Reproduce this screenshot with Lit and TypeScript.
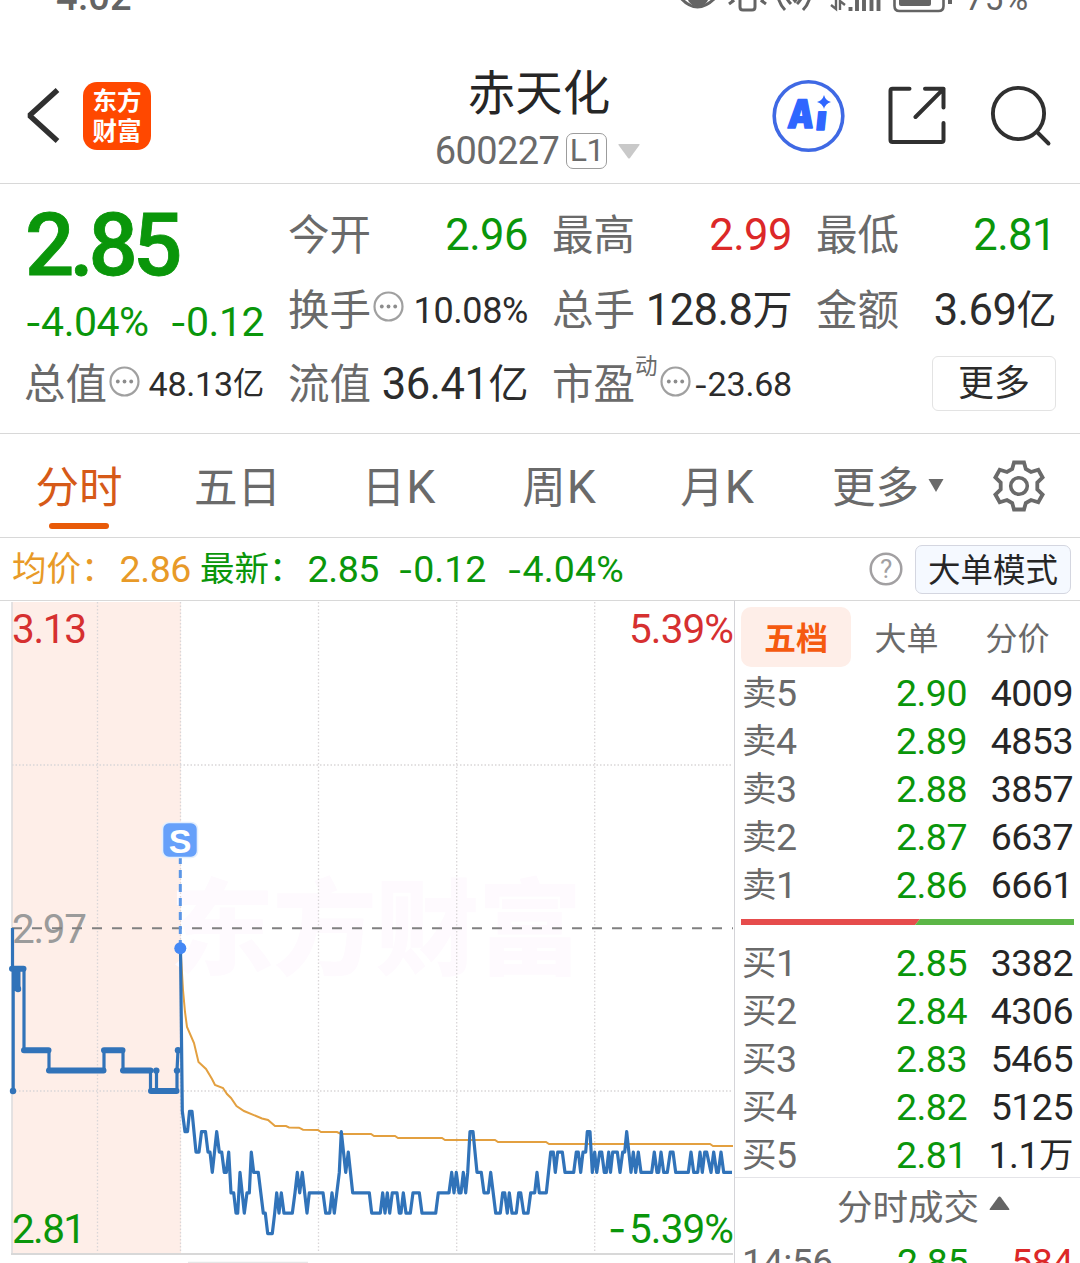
import { LitElement, html, svg, css } from "lit";
import { customElement, property } from "lit/decorators.js";

/** Splits a label into CJK, minus and plain runs so each gets its own metrics. */
const runs = (s: string) =>
  (s.match(/[\u4e00-\u9fff\uff1a]+|-|[^\u4e00-\u9fff\uff1a-]+/g) ?? []).map((r) =>
    /[\u4e00-\u9fff\uff1a]/.test(r)
      ? html`<span class="cjk">${r}</span>`
      : r === "-"
        ? html`<span class="neg">-</span>`
        : html`<span>${r}</span>`
  );

const base = css`
  :host,
  * {
    box-sizing: border-box;
  }
  .cjk {
    font-family: "Noto Sans CJK SC", sans-serif;
    font-size: 0.92em;
    line-height: 1;
    vertical-align: 1px;
  }
  .neg {
    font-family: Inter, sans-serif;
    font-size: 0.88em;
    line-height: 1;
  }
  .up {
    color: #dc2828;
  }
  .down {
    color: #0a960a;
  }
  svg {
    display: block;
    flex: none;
  }
`;

// Prices in cents against the horizontal position of each minute sample.
const PRICE: [number, number][] = [
  [180.5, 296], [182.3, 288], [185, 287], [187.5, 287], [189.5, 288], [192, 288], [196, 286], [199, 286],
  [201.5, 287], [205.5, 287], [208, 286], [210, 286], [212.3, 285], [216.7, 287], [219.3, 286], [221.7, 286],
  [224.3, 285], [226.3, 285], [228.7, 286], [231, 284], [233.7, 284], [236, 283], [237.7, 283], [240, 285],
  [244.3, 283], [247, 284], [249.3, 284], [251.3, 286], [253.7, 285], [258.3, 285], [263.3, 283], [265.3, 283],
  [267.7, 282], [272.3, 282], [274.7, 283], [276.7, 284], [279, 283], [281.3, 284], [284, 283], [292.3, 283],
  [295, 284], [297.3, 285], [299.7, 284], [302.3, 285], [307, 283], [309.3, 284], [323, 284], [325.7, 283],
  [329.7, 283], [332, 284], [334.3, 283], [339.3, 285], [341.3, 287], [345.7, 285], [348.3, 286], [352.7, 284],
  [369.3, 284], [371.7, 283], [380.3, 283], [382.7, 284], [385, 283], [387.3, 284], [389.7, 283], [392.3, 284],
  [397, 284], [399.3, 283], [401, 283], [403.3, 284], [406, 283], [410.3, 283], [413, 284], [419.3, 284],
  [422, 283], [435.7, 283], [438.3, 284], [449, 284], [451.7, 285], [454, 284], [456.3, 285], [459, 284],
  [461, 284], [463.3, 285], [465.7, 284], [467.7, 285], [470, 287], [473, 287], [477, 285], [481.3, 285],
  [484, 284], [488.3, 284], [490.7, 285], [495.7, 283], [500.3, 283], [502.7, 284], [504.7, 284], [507.3, 283],
  [509.3, 284], [512, 283], [516.3, 283], [518.7, 284], [520.7, 284], [523.7, 283], [528, 283], [530.7, 284],
  [534.7, 284], [537, 285], [539.3, 284], [546.3, 284], [550.7, 286], [553.3, 286], [555.3, 285], [557.7, 286],
  [562.3, 286], [565, 285], [573.7, 285], [576.3, 286], [578.3, 286], [580.7, 285], [583, 286], [585.7, 286],
  [587.3, 287], [590, 287], [592.3, 285], [594.7, 286], [596.7, 285], [599.7, 286], [601.7, 286], [604.3, 285],
  [606.3, 285], [608.7, 286], [610.5, 285], [612.7, 286], [617.3, 286], [620, 285], [622.7, 286], [624.7, 286],
  [626.7, 287], [631, 285], [633.3, 286], [635.7, 285], [638.3, 286], [641, 285], [651.7, 285], [654.3, 286],
  [657, 285], [658.7, 285], [661, 286], [663.7, 285], [667.3, 285], [670.3, 286], [673, 286], [675.7, 285],
  [688.3, 285], [691, 286], [693.7, 285], [697.7, 285], [700, 286], [702.3, 285], [704.7, 286], [706.7, 286],
  [711, 285], [713.7, 286], [716.7, 285], [718.3, 285], [721, 286], [723.7, 285], [732, 285],
];

const AVERAGE =
  "180.5,948 183,990 185,1012 187,1027 194,1043 198.5,1062 206,1069 212,1079 215,1085 223,1088 227,1094 " +
  "231,1098 236.5,1106 244,1111 262,1118.5 268,1120 275,1126 286,1126 289,1127.5 299,1127.7 303,1129.7 " +
  "318,1130 321,1132 337,1132 341,1134 371,1134 374,1136 395,1136 398,1138 442,1138 445,1140 495,1140 " +
  "498,1142 546,1142 549,1144 710,1144 713,1146 733,1146";

const yOf = (cents: number) => 928 + (297 - cents) * 20.37;

@customElement("status-bar")
class StatusBar extends LitElement {
  static styles = [
    base,
    css`
      :host {
        display: flex;
        justify-content: space-between;
        align-items: flex-end;
        height: 14px;
        overflow: hidden;
        padding: 0 51px 0 56px;
        color: #646464;
        font: 500 38px/30px Roboto, sans-serif;
      }
      .right {
        display: flex;
        align-items: flex-end;
        gap: 13px;
      }
      .time {
        height: 32px;
        letter-spacing: 0.3px;
      }
      .level {
        font-size: 33px;
        font-weight: 400;
        letter-spacing: 0.8px;
        height: 30px;
      }
    `,
  ];
  render() {
    return html`
      <span class="time">4:02</span>
      <span class="right">
        <svg width="275" height="14" viewBox="675 0 275 14" fill="none" stroke="#646464">
          <circle cx="696" cy="-4.500" r="11" fill="#646464" stroke="none" />
          <path d="M677 -4Q695 18 715 -4" stroke-width="3" />
          <path d="M738 -4V7q0 3 3 3h9q3 0 3-3V-4" stroke-width="3" />
          <path d="M727 4l4-3-3-5M764 4l-4-3 3-5" stroke-width="3" />
          <path d="M776 -3q2 8 7 13M784 -3q2 4 5 7M808 -3q-2 8-7 13M800 -3q-2 4-5 7M789-4l4 5 4-5" stroke-width="3" />
          <path d="M834 -4V9l-5-4M838 10V1l5 4" stroke-width="2.4" />
          <path d="M848.500 7v4M855 -4V11M862 -4V11M869.500 -4V11M876.500 -4V11" stroke-width="3.900" />
          <path d="M892.500 -4V6q0 5 5 5h39q5 0 5-5V-4" stroke-width="2.600" />
          <path d="M897 -4h32V4q0 2-2 2h-28q-2 0-2-2z" fill="#646464" stroke="none" />
          <path d="M948 -4V4" stroke-width="4" />
        </svg>
        <span class="level">75%</span>
      </span>
    `;
  }
}

@customElement("title-bar")
class TitleBar extends LitElement {
  static styles = [
    base,
    css`
      :host {
        display: grid;
        grid-template-columns: 1fr 302px 1fr;
        height: 170px;
        padding: 0 28px 0 26px;
        border-bottom: 1px solid #d8d8d8;
        font-family: Roboto, sans-serif;
      }
      .left,
      .right {
        display: flex;
        align-items: center;
        padding-top: 35px;
      }
      .left {
        gap: 21px;
      }
      .right {
        justify-content: flex-end;
        gap: 42px;
      }
      .logo {
        width: 68px;
        height: 68px;
        border-radius: 14px;
        background: #ff4800;
        color: #fff;
        font: 700 24.5px/29.5px "Noto Sans CJK SC", sans-serif;
        text-align: center;
        padding-top: 3px;
      }
      .middle {
        display: flex;
        flex-direction: column;
        align-items: center;
        padding-top: 48px;
      }
      .name {
        font: 400 47.5px/56px "Noto Sans CJK SC", sans-serif;
        color: #262626;
      }
      .code {
        display: flex;
        align-items: center;
        height: 36px;
        margin: 15px 3px 0 0;
        color: #6a6a6a;
        font-size: 38px;
        letter-spacing: -0.6px;
      }
      .tag {
        width: 41px;
        height: 36px;
        margin: 0 11px 0 7px;
        border: 1.5px solid #9c9c9c;
        border-radius: 7px;
        font-size: 32px;
        line-height: 33px;
        text-align: center;
      }
    `,
  ];
  render() {
    return html`
      <div class="left">
        <svg width="36" height="60" viewBox="26 87 36 60" fill="none" stroke="#303030" stroke-width="5.400" stroke-linejoin="bevel">
          <path d="M57.500 91L29.500 116.500L57.500 142" />
        </svg>
        <div class="logo">东方<br />财富</div>
      </div>
      <div class="middle">
        <div class="name">赤天化</div>
        <div class="code">
          <span>600227</span><span class="tag">L1</span>
          <svg width="22" height="15" viewBox="0 0 22 15"><path d="M1 0h20q1 0 .5 1L12 14q-1 1-2 0L.5 1Q0 0 1 0z" fill="#c9c9c9" /></svg>
        </div>
      </div>
      <div class="right">
        <svg width="74" height="74" viewBox="772 79.500 74 74">
          <circle cx="808.500" cy="116.500" r="34.300" fill="none" stroke="#3f69e4" stroke-width="3.600" />
          <g fill="#2f66ff" stroke="#2f66ff" stroke-width="1.600" stroke-linejoin="round" font-family="Inter, sans-serif" font-weight="900" font-size="39">
            <text transform="translate(787 128.500) skewX(-5)" textLength="26" lengthAdjust="spacingAndGlyphs">A</text>
            <text transform="translate(815 130.500) skewX(-6) scale(.95 .88)" font-size="38">ı</text>
          </g>
          <path d="M824 95.500q1.500 5.500 7 7-5.500 1.500-7 7-1.500-5.500-7-7 5.500-1.500 7-7z" fill="#2f66ff" />
        </svg>
        <svg width="60" height="60" viewBox="887.500 87 60 60" fill="none" stroke="#303030" stroke-width="4" stroke-linecap="round" stroke-linejoin="round">
          <path d="M909 89.800H892q-2 0-2 2V141q0 2 2 2h49q2 0 2-2V124M924.500 89.800H943V108.500M915 118L943 89.800" />
        </svg>
        <svg width="62" height="62" viewBox="990.500 85 62 62" fill="none" stroke="#303030" stroke-width="3.900" stroke-linecap="round">
          <circle cx="1019" cy="113.500" r="25.600" />
          <path d="M1038 132.500L1049 143.500" />
        </svg>
      </div>
    `;
  }
}

@customElement("quote-cell")
class QuoteCell extends LitElement {
  @property() label = "";
  @property() value = "";
  @property() tone = "";
  @property() sup = "";
  @property({ type: Boolean }) hint = false;
  @property() size = "l";
  static styles = [
    base,
    css`
      :host {
        display: flex;
        align-items: center;
        justify-content: space-between;
        height: 74.5px;
        white-space: nowrap;
        font-family: Roboto, sans-serif;
        color: #2c2c2c;
      }
      .label {
        display: flex;
        align-items: center;
        margin: -6px 0 0 -1px;
        color: #6a6a6a;
        font: 400 41.5px/60px "Noto Sans CJK SC", sans-serif;
      }
      .label svg {
        margin: 0 0 0 2px;
      }
      .sup {
        font-size: 22.5px;
        align-self: flex-start;
        line-height: 30px;
        margin: -2px 0 0;
      }
      .value {
        line-height: 60px;
        padding-top: 2px;
      }
      .l {
        font-size: 43.5px;
        letter-spacing: -0.5px;
      }
      .m {
        font-size: 36px;
        letter-spacing: -0.4px;
      }
      .s {
        font-size: 34px;
        letter-spacing: -0.2px;
        padding-top: 0;
      }
    `,
  ];
  render() {
    return html`
      <span class="label"
        >${this.label}${this.sup ? html`<span class="sup">${this.sup}</span>` : ""}${this.hint
          ? html`<svg width="31" height="31" viewBox="0 0 31 31">
              <circle cx="15.500" cy="15.500" r="14" fill="none" stroke="#a0a0a0" stroke-width="2.200" />
              <g fill="#8c8c8c"><circle cx="8.800" cy="15.500" r="1.900" /><circle cx="15.500" cy="15.500" r="1.900" /><circle cx="22.200" cy="15.500" r="1.900" /></g>
            </svg>`
          : ""}</span
      >
      <span class="value ${this.size} ${this.tone}">${runs(this.value)}</span>
    `;
  }
}

@customElement("quote-panel")
class QuotePanel extends LitElement {
  static styles = [
    base,
    css`
      :host {
        display: grid;
        grid-template-columns: repeat(4, 239px);
        grid-auto-rows: 74.5px;
        column-gap: 25px;
        height: 250px;
        padding: 14px 24px 0 25px;
        border-bottom: 1px solid #d8d8d8;
        font-family: Roboto, sans-serif;
      }
      .main {
        grid-row: span 2;
      }
      .price {
        font-size: 87px;
        font-weight: 500;
        line-height: 94px;
        letter-spacing: -5px;
        -webkit-text-stroke: 0.8px currentColor;
      }
      .change {
        display: flex;
        justify-content: space-between;
        font-size: 41px;
        line-height: 50px;
        margin-top: 5px;
        letter-spacing: -0.5px;
      }
      .more {
        justify-self: end;
        align-self: center;
        width: 124px;
        height: 55px;
        margin-top: -2px;
        border: 1.5px solid #e3e3e3;
        border-radius: 6px;
        background: none;
        color: #2c2c2c;
        padding: 0 0 5px;
        font: 400 36px/45px "Noto Sans CJK SC", sans-serif;
      }
    `,
  ];
  render() {
    return html`
      <div class="main down">
        <div class="price">2.85</div>
        <div class="change"><span>${runs("-4.04%")}</span><span>${runs("-0.12")}</span></div>
      </div>
      <quote-cell label="今开" value="2.96" tone="down"></quote-cell>
      <quote-cell label="最高" value="2.99" tone="up"></quote-cell>
      <quote-cell label="最低" value="2.81" tone="down"></quote-cell>
      <quote-cell label="换手" value="10.08%" size="m" hint></quote-cell>
      <quote-cell label="总手" value="128.8万"></quote-cell>
      <quote-cell label="金额" value="3.69亿"></quote-cell>
      <quote-cell label="总值" value="48.13亿" size="s" hint></quote-cell>
      <quote-cell label="流值" value="36.41亿"></quote-cell>
      <quote-cell label="市盈" sup="动" value="-23.68" size="s" hint></quote-cell>
      <button class="more">更多</button>
    `;
  }
}

@customElement("period-tabs")
class PeriodTabs extends LitElement {
  static styles = [
    base,
    css`
      :host {
        display: grid;
        grid-template-columns: 158px 159px 163px 158px 158px 148px 1fr;
        height: 104px;
        border-bottom: 1px solid #d8d8d8;
        font: 400 43.5px/60px "Noto Sans CJK SC", sans-serif;
        color: #6a6a6a;
      }
      .tab {
        display: flex;
        flex-direction: column;
        align-items: center;
        padding-top: 21px;
        white-space: nowrap;
      }
      .active {
        color: #d65a18;
      }
      .active::after {
        content: "";
        width: 60px;
        height: 6px;
        margin-top: 8px;
        border-radius: 3px;
        background: #e85a08;
      }
      .k {
        margin-left: 1px;
        font-family: Roboto, sans-serif;
        font-size: 46.5px;
        line-height: 1;
      }
      .more {
        flex-direction: row;
        align-items: flex-start;
        justify-content: flex-end;
        gap: 9px;
      }
      .more svg {
        margin-top: 24px;
      }
      .gear {
        display: flex;
        justify-content: center;
        padding: 25px 0 0 13px;
      }
    `,
  ];
  render() {
    return html`
      <div class="tab active">分时</div>
      <div class="tab">五日</div>
      ${["日", "周", "月"].map((d) => html`<div class="tab"><span>${d}<span class="k">K</span></span></div>`)}
      <div class="tab more">
        更多<svg width="16" height="14" viewBox="0 0 16 14"><path d="M.5 0h15L8 13z" fill="#6a6a6a" /></svg>
      </div>
      <div class="gear">
        <svg width="54" height="54" viewBox="-27 -27 54 54" fill="none" stroke="#6a6a6a" stroke-width="3.800">
          <path
            d="M-5-23.500H5L6.800-17L12-14L19.300-16.200L23.600-8.500L18.300-3.500V3.500L23.600 8.500L19.300 16.200L12 14L6.800 17L5 23.500H-5L-6.800 17L-12 14L-19.300 16.200L-23.600 8.500L-18.300 3.500V-3.500L-23.600-8.500L-19.300-16.200L-12-14L-6.800-17Z"
          />
          <circle r="8.300" stroke-width="3.600" />
        </svg>
      </div>
    `;
  }
}

@customElement("info-strip")
class InfoStrip extends LitElement {
  static styles = [
    base,
    css`
      :host {
        display: flex;
        align-items: center;
        height: 63px;
        padding: 0 9px 0 12px;
        border-bottom: 1px solid #d8d8d8;
        font: 400 37.5px/60px Roboto, sans-serif;
        letter-spacing: -0.4px;
        white-space: nowrap;
      }
      .avg {
        color: #e89a28;
        width: 188px;
      }
      .last {
        width: 198px;
      }
      .cjk {
        margin-right: 4px;
        letter-spacing: 0;
      }
      .diff {
        width: 109px;
        letter-spacing: 0;
      }
      .rate {
        letter-spacing: 0.2px;
      }
      .help {
        margin: 0 12px 0 auto;
      }
      .mode {
        width: 156px;
        height: 49px;
        padding: 0 0 2px;
        border: 1.5px solid #d4d6e0;
        border-radius: 7px;
        background: #f5f9ff;
        color: #262626;
        font: 400 32.5px/42px "Noto Sans CJK SC", sans-serif;
      }
    `,
  ];
  render() {
    return html`
      <span class="avg">${runs("均价：2.86")}</span>
      <span class="last down">${runs("最新：2.85")}</span>
      <span class="diff down">${runs("-0.12")}</span>
      <span class="rate down">${runs("-4.04%")}</span>
      <svg class="help" width="34" height="34" viewBox="0 0 34 34">
        <circle cx="17" cy="17" r="15.300" fill="none" stroke="#a2a0a2" stroke-width="2.500" />
        <text x="17" y="26" text-anchor="middle" font-family="Roboto, sans-serif" font-size="26" fill="#a2a0a2">?</text>
      </svg>
      <button class="mode">大单模式</button>
    `;
  }
}

@customElement("minute-chart")
class MinuteChart extends LitElement {
  static styles = [
    base,
    css`
      :host {
        display: block;
        width: 735px;
        border-right: 1px solid #d4d4d8;
      }
      .axis {
        font: 400 40.5px Roboto, sans-serif;
      }
      .mark {
        font: 900 104px "Noto Sans CJK SC", sans-serif;
      }
      .sell {
        font: 700 34px "Liberation Sans", sans-serif;
      }
      .minus {
        font: 400 40px Inter, sans-serif;
      }
    `,
  ];
  render() {
    const line = PRICE.map(([x, p]) => `${x},${yOf(p)}`).join(" ");
    return html`
      <svg width="734" height="662" viewBox="0 601 734 662" fill="none">
        <rect x="12" y="602" width="169" height="651" fill="#feeee8" />
        <text class="mark" x="170" y="967" textLength="412" fill="#fefafe">东方财富</text>
        <g stroke="#d9d6d8" stroke-width="1.300" stroke-dasharray="1.500 2">
          ${[97.5, 180.5, 318.5, 456.7, 594.7].map((x) => svg`<path d="M${x} 602V1253"/>`)}
          ${[765, 1091].map((y) => svg`<path d="M12 ${y}H733"/>`)}
        </g>
        <path d="M12 602V1254" stroke="#dedcde" stroke-width="1.600" />
        <path d="M11 1254H733" stroke="#d8d8d8" stroke-width="2" />
        <path d="M188 1262.500H308" stroke="#e6e6e6" stroke-width="1.500" />
        <text class="axis" x="12" y="943" textLength="75" fill="#9b9b9b">2.97</text>
        <path d="M12 928.200H733" stroke="#808080" stroke-width="1.900" stroke-dasharray="10 10" />
        <polyline points=${AVERAGE} stroke="#e3a040" stroke-width="2" />
        <g stroke="#3173b9" stroke-linejoin="round">
          <path
            d="M12.500 928V968M13.200 968V1091M24 968.700V1050.300M49 1050.300V1070.600M104 1070.600V1050.300M123 1050.300V1070.600M150.500 1070.600V1091M156.500 1070.600V1091M177 1091V1070.600L178 1050.300"
            stroke-width="3.200"
          />
          <path
            d="M12 968.700H23.500M24 1050.300H48.500M49 1070.600H103.500M104 1050.300H122.500M123 1070.600H150.500M151 1091H176.500"
            stroke-width="6"
            stroke-linecap="round"
          />
          <path d="M17 969V991" stroke-width="7" />
          <polyline points=${line} stroke-width="3.200" />
        </g>
        <g fill="#3173b9">
          ${[[13, 1091], [18, 989], [156.3, 1070.6], [177, 1070.6], [178, 1050.3]].map(
            ([x, y]) => svg`<circle cx=${x} cy=${y} r="3.200"/>`
          )}
        </g>
        <path d="M180.300 858V946" stroke="#5b96e6" stroke-width="3" stroke-dasharray="8 6" stroke-dashoffset="2" />
        <circle cx="180.300" cy="948.300" r="6" fill="#4488f5" />
        <rect x="162.500" y="822.500" width="35" height="35" rx="6.500" fill="#66a0fa" stroke="#e4effd" stroke-width="1.600" />
        <text class="sell" x="180" y="852.500" text-anchor="middle" fill="#fff">S</text>
        <g class="axis">
          <text x="12" y="643" textLength="75" fill="#d63030">3.13</text>
          <text x="629" y="643" textLength="105" fill="#d63030">5.39%</text>
          <text x="12" y="1243" textLength="74" fill="#0a960a">2.81</text>
          <text class="minus" x="608" y="1243" fill="#0a960a">-</text>
          <text x="629" y="1243" textLength="105" fill="#0a960a">5.39%</text>
        </g>
      </svg>
    `;
  }
}

@customElement("order-book")
class OrderBook extends LitElement {
  private asks = [["卖5", "2.90", "4009"], ["卖4", "2.89", "4853"], ["卖3", "2.88", "3857"], ["卖2", "2.87", "6637"], ["卖1", "2.86", "6661"]];
  private bids = [["买1", "2.85", "3382"], ["买2", "2.84", "4306"], ["买3", "2.83", "5465"], ["买4", "2.82", "5125"], ["买5", "2.81", "1.1万"]];
  static styles = [
    base,
    css`
      :host {
        display: block;
        flex: 1;
        height: 662px;
        overflow: hidden;
        font: 400 37.5px/46px Roboto, sans-serif;
        letter-spacing: -0.5px;
        white-space: nowrap;
        color: #262626;
      }
      .tabs {
        display: grid;
        grid-template-columns: 111px 111px 111px;
        padding: 6px 0 0 5px;
        height: 67px;
        font: 400 32px/58px "Noto Sans CJK SC", sans-serif;
        letter-spacing: 0;
        color: #6a6a6a;
        text-align: center;
      }
      .tab {
        height: 60px;
      }
      .active {
        margin-left: 1px;
        background: #feeee8;
        border-radius: 10px;
        color: #f55a10;
        font-weight: 700;
      }
      .row {
        display: grid;
        grid-template-columns: 90px 135px 1fr;
        height: 48px;
        padding: 2px 7px 0 7px;
        text-align: right;
      }
      .who {
        color: #6a6a6a;
        text-align: left;
      }
      .ratio {
        display: flex;
        height: 6px;
        margin: 11px 6px 13px;
      }
      .ratio svg {
        width: 333px;
      }
      .fold {
        display: flex;
        align-items: center;
        justify-content: center;
        gap: 10px;
        height: 60px;
        margin-top: -1px;
        padding: 0 0 6px 32px;
        border-top: 1px solid #e4e4e8;
        color: #6a6a6a;
        font: 400 35.5px/54px "Noto Sans CJK SC", sans-serif;
        letter-spacing: 0;
      }
      .fold svg {
        margin-top: -3px;
      }
      .trade {
        grid-template-columns: 100px 126px 1fr;
      }
      .trade .who {
        letter-spacing: -0.5px;
      }
    `,
  ];
  private row([who, price, vol]: string[]) {
    return html`<div class="row"><span class="who">${runs(who)}</span><span class="down">${price}</span><span>${runs(vol)}</span></div>`;
  }
  render() {
    return html`
      <div class="tabs"><span class="tab active">五档</span><span class="tab">大单</span><span class="tab">分价</span></div>
      ${this.asks.map((r) => this.row(r))}
      <div class="ratio">
        <svg height="6" viewBox="0 0 333 6"><path d="M0 0H179L174 6H0z" fill="#e64c4c" /><path d="M179 0H333V6H174z" fill="#5cb647" /></svg>
      </div>
      ${this.bids.map((r) => this.row(r))}
      <div class="fold">
        分时成交<svg width="21" height="15" viewBox="0 0 21 15"><path d="M1.500 14h18q1.500 0 .5-1.500L12 1.500q-1.500-2-3 0L1 12.500Q0 14 1.500 14z" fill="#646464" /></svg>
      </div>
      <div class="row trade"><span class="who">14:56</span><span class="down">2.85</span><span class="up">584</span></div>
    `;
  }
}

@customElement("app-root")
class AppRoot extends LitElement {
  static styles = css`
    :host {
      display: block;
      width: 1080px;
      height: 1263px;
      overflow: hidden;
      background: #fff;
    }
    .body {
      display: flex;
      height: 662px;
    }
  `;
  render() {
    return html`
      <status-bar></status-bar>
      <title-bar></title-bar>
      <quote-panel></quote-panel>
      <period-tabs></period-tabs>
      <info-strip></info-strip>
      <div class="body"><minute-chart></minute-chart><order-book></order-book></div>
    `;
  }
}
